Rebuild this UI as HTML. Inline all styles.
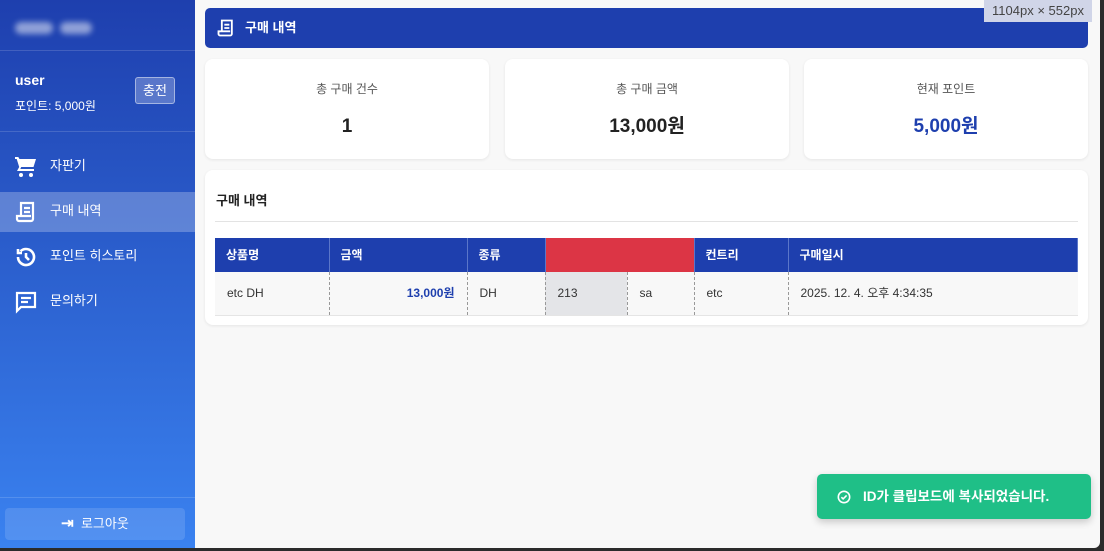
<!DOCTYPE html>
<html><head><meta charset="utf-8"><style>
*{box-sizing:border-box;margin:0;padding:0}
body{width:1104px;height:551px;overflow:hidden;background:#2b2b2b;font-family:"Liberation Sans","Noto Sans CJK KR",sans-serif;position:relative}
.app{position:absolute;left:0;top:0;width:1100px;height:548px;background:#f8f8f8;border-bottom-right-radius:6px;overflow:hidden}
.side{position:absolute;left:0;top:0;width:195px;height:548px;background:linear-gradient(#1e3fae,#3a82f0);color:#fff}
.logo{height:51px;border-bottom:1px solid rgba(255,255,255,.15);position:relative}
.blur{position:absolute;top:22px;height:12px;background:rgba(255,255,255,.5);filter:blur(3px);border-radius:6px}
.user{height:81px;border-bottom:1px solid rgba(255,255,255,.15);position:relative}
.user b{position:absolute;left:15px;top:21px;font-size:14px;line-height:17px}
.user span{position:absolute;left:15px;top:48px;font-size:12px;line-height:15px}
.charge{position:absolute;left:135px;top:26px;width:40px;height:27px;border:1px solid rgba(255,255,255,.45);background:rgba(255,255,255,.25);border-radius:3px;font-size:13px;text-align:center;line-height:25px}
.nav{position:absolute;left:0;width:195px;height:40px;font-size:13px}
.nav svg{position:absolute;left:14px;top:8px}
.nav span{position:absolute;left:50px;top:11px;line-height:16px}
.nav.act{background:rgba(255,255,255,.25)}
.logout{position:absolute;left:5px;top:508px;width:180px;height:32px;background:rgba(255,255,255,.13);border-radius:4px;font-size:13px;text-align:center;line-height:32px}
.lsep{position:absolute;left:0;top:497px;width:195px;border-top:1px solid rgba(255,255,255,.15)}
.hdr{position:absolute;left:205px;top:8px;width:883px;height:40px;background:#1e3fae;border-radius:5px;color:#fff;font-weight:bold;font-size:13px}
.card{position:absolute;background:#fff;border-radius:8px;box-shadow:0 1px 3px rgba(0,0,0,.08)}
.stat{top:59px;height:100px;width:284px;text-align:center}
.stat .l{position:absolute;top:22px;width:100%;font-size:12px;line-height:16px;color:#555}
.stat .v{position:absolute;top:56px;width:100%;font-size:19px;line-height:24px;font-weight:bold;color:#222}
table{position:absolute;left:215px;top:238px;width:863px;border-collapse:collapse;font-size:12px}
th{background:#1e3fae;color:#fff;text-align:left;height:34px;padding-left:11px;font-weight:bold;border-right:1px solid #5b76c9;line-height:15px}
td{height:43px;padding-left:12px;color:#333;background:#f8f8f8;border-right:1px dashed #999;border-bottom:1px solid #e5e5e5;line-height:15px}
.toast{position:absolute;left:817px;top:474px;width:274px;height:45px;background:#1fbf87;border-radius:5px;color:#fff;font-size:13.5px;font-weight:bold;box-shadow:0 3px 8px rgba(0,0,0,.2)}
.dim{position:absolute;left:984px;top:0;width:108px;height:22px;background:#d0d5e8;color:#444;font-size:13px;text-align:center;line-height:22px}
</style></head><body>
<div class="app">
<div class="side">
 <div class="logo"><div class="blur" style="left:15px;width:38px"></div><div class="blur" style="left:60px;width:32px"></div></div>
 <div class="user"><b>user</b><span>포인트: 5,000원</span><div class="charge">충전</div></div>
 <div class="nav" style="top:147px"><svg width="24" height="24" viewBox="0 0 24 24" fill="#fff"><path d="M1 2h3.3l1.2 2H22l-2.5 8H7.2l-.9 2H20v2H3l2.2-4L2.7 4H1z"/><circle cx="7" cy="20" r="2"/><circle cx="17" cy="20" r="2"/></svg><span>자판기</span></div>
 <div class="nav act" style="top:192px"><svg width="24" height="24" viewBox="0 0 24 24" fill="none" stroke="#fff" stroke-width="2.2"><path d="M7 3h12v16a2 2 0 0 1-2 2H5a2 2 0 0 1-2-2v-3h4V3zM10 8h6M10 12h6M7 16h10"/></svg><span>구매 내역</span></div>
 <div class="nav" style="top:237px"><svg width="24" height="24" viewBox="0 0 24 24" fill="none" stroke="#fff" stroke-width="2.6"><path d="M4 12a8 8 0 1 0 2.5-5.8M4 4v4h4M12 8v4l3 3"/></svg><span>포인트 히스토리</span></div>
 <div class="nav" style="top:282px"><svg width="24" height="24" viewBox="0 0 24 24" fill="none" stroke="#fff" stroke-width="2.2"><path d="M3 3h18v14H7l-4 4zM7 8h10M7 12h7"/></svg><span>문의하기</span></div>
 <div class="lsep"></div>
 <div class="logout"><b style="font-size:15px">⇥</b>&nbsp; 로그아웃</div>
</div>
<div class="hdr"><svg style="position:absolute;left:11px;top:10px" width="20" height="20" viewBox="0 0 24 24" fill="none" stroke="#fff" stroke-width="2.2"><path d="M7 3h12v16a2 2 0 0 1-2 2H5a2 2 0 0 1-2-2v-3h4V3zM10 8h6M10 12h6M7 16h10"/></svg><span style="position:absolute;left:40px;top:12px;line-height:16px">구매 내역</span></div>
<div class="card stat" style="left:205px"><div class="l">총 구매 건수</div><div class="v">1</div></div>
<div class="card stat" style="left:505px"><div class="l">총 구매 금액</div><div class="v">13,000원</div></div>
<div class="card stat" style="left:804px"><div class="l">현재 포인트</div><div class="v" style="color:#1e3fae">5,000원</div></div>
<div class="card" style="left:205px;top:170px;width:883px;height:155px">
 <div style="position:absolute;left:11px;top:23px;font-size:13px;line-height:16px;font-weight:bold;color:#222">구매 내역</div>
 <div style="position:absolute;left:10px;top:51px;width:863px;border-top:1px solid #e3e3e3"></div>
</div>
<table>
<tr><th style="width:114px">상품명</th><th style="width:138px">금액</th><th style="width:78px">종류</th><th style="width:82px;background:#dc3545;border-right:none"></th><th style="width:67px;background:#dc3545"></th><th style="width:94px">컨트리</th><th>구매일시</th></tr>
<tr><td>etc DH</td><td style="text-align:right;padding-right:12px;color:#1e3fae;font-weight:bold">13,000원</td><td>DH</td><td style="background:#e4e5e8">213</td><td>sa</td><td>etc</td><td style="border-right:none">2025. 12. 4. 오후 4:34:35</td></tr>
</table>
<div class="toast"><svg style="position:absolute;left:20px;top:16px" width="14" height="14" viewBox="0 0 16 16" fill="none" stroke="#fff" stroke-width="1.8"><circle cx="8" cy="8" r="6.5"/><path d="M5 8.2l2 2 4-4"/></svg><span style="position:absolute;left:46px;top:14px;line-height:17px">ID가 클립보드에 복사되었습니다.</span></div>
<div class="dim">1104px × 552px</div>
</div>
</body></html>
